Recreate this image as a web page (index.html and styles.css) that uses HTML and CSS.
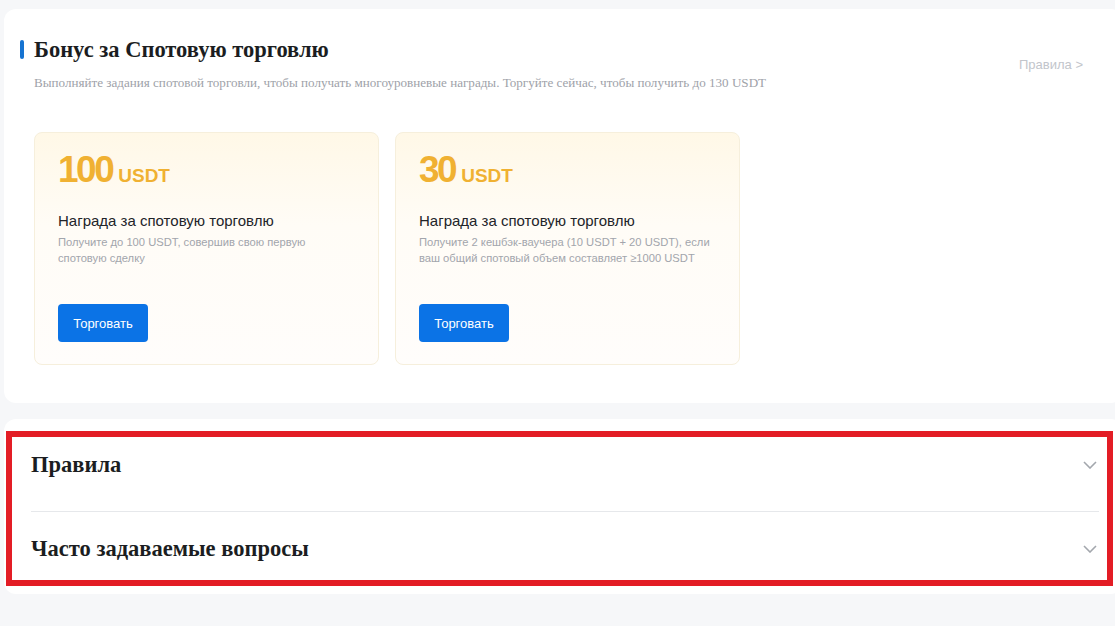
FILE: index.html
```html
<!DOCTYPE html>
<html lang="ru">
<head>
  <meta charset="UTF-8">
  <meta name="viewport" content="width=device-width, initial-scale=1.0">
  <title>Бонус за Спотовую торговлю</title>
  <link rel="stylesheet" href="styles.css">
</head>
<body>
  <div class="page">
    <section class="panel bonus">
      <div class="bonus-head">
        <div class="bonus-titles">
          <h1 class="bonus-title">Бонус за Спотовую торговлю</h1>
          <p class="bonus-sub">Выполняйте задания спотовой торговли, чтобы получать многоуровневые награды. Торгуйте сейчас, чтобы получить до 130 USDT</p>
        </div>
        <a class="rules-link" href="#">Правила &gt;</a>
      </div>

      <div class="tasks">
        <div class="task">
          <div class="amount"><span class="num">100</span><span class="cur">USDT</span></div>
          <h3 class="task-name">Награда за спотовую торговлю</h3>
          <p class="task-desc">Получите до 100 USDT, совершив свою первую спотовую сделку</p>
          <button class="trade-btn">Торговать</button>
        </div>
        <div class="task">
          <div class="amount"><span class="num">30</span><span class="cur">USDT</span></div>
          <h3 class="task-name">Награда за спотовую торговлю</h3>
          <p class="task-desc">Получите 2 кешбэк-ваучера (10 USDT + 20 USDT), если ваш общий спотовый объем составляет ≥1000 USDT</p>
          <button class="trade-btn">Торговать</button>
        </div>
      </div>
    </section>

    <section class="panel faq">
      <div class="highlight">
        <div class="acc-row first">
          <h2>Правила</h2>
          <svg class="chev" width="14" height="8" viewBox="0 0 14 8"><path d="M1 1l6 6 6-6" fill="none" stroke="#a3a7ad" stroke-width="1.6"/></svg>
        </div>
        <div class="acc-row second">
          <h2>Часто задаваемые вопросы</h2>
          <svg class="chev" width="14" height="8" viewBox="0 0 14 8"><path d="M1 1l6 6 6-6" fill="none" stroke="#a3a7ad" stroke-width="1.6"/></svg>
        </div>
      </div>
    </section>
  </div>
</body>
</html>
```

FILE: styles.css
```css
* {
  margin: 0;
  padding: 0;
  box-sizing: border-box;
}

html, body {
  overflow: hidden;
}

body {
  background: #f6f7f9;
  font-family: 'Liberation Sans', Arial, sans-serif;
  color: #1f2329;
  min-height: 626px;
}

.page {
  padding: 9px 0 0 4px;
}

.panel {
  background: #ffffff;
  border-radius: 12px;
  margin-right: -8px;
}

/* top block */

.bonus {
  padding: 28px 40px 38px 30px;
}

.bonus-head {
  display: flex;
  align-items: center;
  justify-content: space-between;
}

.bonus-title {
  display: flex;
  align-items: center;
  gap: 10px;
  margin-left: -14px;
  font-family: 'Liberation Serif', 'Times New Roman', serif;
  font-size: 22.5px;
  font-weight: bold;
  line-height: 25px;
  color: #1b1d21;
}

.bonus-title::before {
  content: "";
  width: 4px;
  height: 19px;
  border-radius: 2px;
  background: #1673d1;
}

.bonus-sub {
  margin-top: 13px;
  font-family: 'Liberation Serif', 'Times New Roman', serif;
  font-size: 13.1px;
  line-height: 16px;
  color: #9ea2a9;
}

.rules-link {
  font-size: 13px;
  color: #c2c5cb;
  text-decoration: none;
}

.tasks {
  display: flex;
  gap: 16px;
  margin-top: 41px;
}

.task {
  width: 345px;
  height: 233px;
  padding: 17px 22px 0 23px;
  border: 1px solid #f6efdc;
  border-radius: 8px;
  background: linear-gradient(180deg, #fff8e7 0%, #fffcf6 40%, #fffdfb 100%);
}

.amount {
  display: flex;
  align-items: baseline;
  gap: 6px;
  color: #f0b132;
  font-weight: bold;
  line-height: 40px;
}

.amount .num {
  font-size: 37px;
  letter-spacing: -2.5px;
}

.amount .cur {
  font-size: 19px;
}

.task-name {
  margin-top: 15px;
  font-size: 15px;
  font-weight: normal;
  line-height: 20px;
  color: #222429;
}

.task-desc {
  margin-top: 3px;
  max-width: 294px;
  font-size: 11.2px;
  line-height: 16px;
  color: #a2a5ac;
}

.trade-btn {
  display: block;
  width: 90px;
  height: 38px;
  margin-top: 38px;
  background: #0b73e6;
  color: #ffffff;
  border: none;
  border-radius: 4px;
  font-family: 'Liberation Sans', Arial, sans-serif;
  font-size: 13px;
  cursor: pointer;
}

/* accordion block */

.faq {
  margin-top: 16px;
  padding: 12px 10px 8px 2px;
}

.highlight {
  width: 1107px;
  border: 6px solid #e31d25;
  padding: 0 8px 0 19px;
}

.acc-row {
  display: flex;
  align-items: center;
  justify-content: space-between;
  padding-right: 2px;
}

.acc-row.first {
  padding-top: 15px;
  padding-bottom: 34px;
  border-bottom: 1px solid #e6e8eb;
}

.acc-row.second {
  padding-top: 24px;
  padding-bottom: 19px;
}

.acc-row h2 {
  font-family: 'Liberation Serif', 'Times New Roman', serif;
  font-size: 22.5px;
  font-weight: bold;
  line-height: 25px;
  color: #1b1d21;
}

.chev {
  display: block;
}
```
